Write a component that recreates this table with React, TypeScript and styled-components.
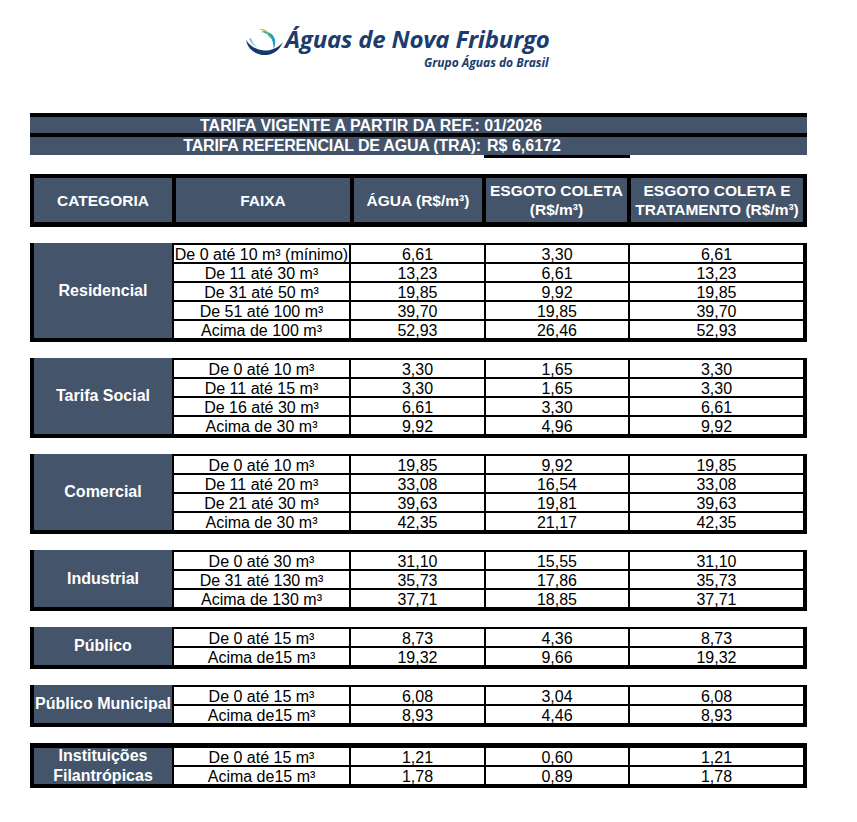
import styled, { createGlobalStyle } from 'styled-components';

type Row = [string, string, string, string];

type Block = {
  name: string;
  rows: Row[];
  fullTop?: boolean;
};

const blocks: Block[] = [
  {
    name: 'Residencial',
    rows: [
      ['De 0 até 10 m³ (mínimo)', '6,61', '3,30', '6,61'],
      ['De 11 até 30 m³', '13,23', '6,61', '13,23'],
      ['De 31 até 50 m³', '19,85', '9,92', '19,85'],
      ['De 51 até 100 m³', '39,70', '19,85', '39,70'],
      ['Acima de 100 m³', '52,93', '26,46', '52,93'],
    ],
  },
  {
    name: 'Tarifa Social',
    rows: [
      ['De 0 até 10 m³', '3,30', '1,65', '3,30'],
      ['De 11 até 15 m³', '3,30', '1,65', '3,30'],
      ['De 16 até 30 m³', '6,61', '3,30', '6,61'],
      ['Acima de 30 m³', '9,92', '4,96', '9,92'],
    ],
  },
  {
    name: 'Comercial',
    rows: [
      ['De 0 até 10 m³', '19,85', '9,92', '19,85'],
      ['De 11 até 20 m³', '33,08', '16,54', '33,08'],
      ['De 21 até 30 m³', '39,63', '19,81', '39,63'],
      ['Acima de 30 m³', '42,35', '21,17', '42,35'],
    ],
  },
  {
    name: 'Industrial',
    rows: [
      ['De 0 até 30 m³', '31,10', '15,55', '31,10'],
      ['De 31 até 130 m³', '35,73', '17,86', '35,73'],
      ['Acima de 130 m³', '37,71', '18,85', '37,71'],
    ],
  },
  {
    name: 'Público',
    rows: [
      ['De 0 até 15 m³', '8,73', '4,36', '8,73'],
      ['Acima de15 m³', '19,32', '9,66', '19,32'],
    ],
  },
  {
    name: 'Público Municipal',
    rows: [
      ['De 0 até 15 m³', '6,08', '3,04', '6,08'],
      ['Acima de15 m³', '8,93', '4,46', '8,93'],
    ],
  },
  {
    name: 'Instituições\nFilantrópicas',
    fullTop: true,
    rows: [
      ['De 0 até 15 m³', '1,21', '0,60', '1,21'],
      ['Acima de15 m³', '1,78', '0,89', '1,78'],
    ],
  },
];

const Logo = () => (
  <LogoWrap>
    <svg width="40" height="30" viewBox="0 0 40 30">
      <path d="M2 13 C4 23 13 29 23 28 C31 27 36 22 39 15 C34 21 27 24 20 23.5 C12 23 6 19 2 13 Z" fill="#16386a" />
      <path d="M5 12 C7 16 10 19 14 20.5 C10 18 8 15 7 11 Z" fill="#6cc5e6" />
      <path d="M17 5 C25 6 30 12 29.5 22 C34 14 30 5 20 4.2 C19 4.2 18 4.5 17 5 Z" fill="#1aa0c9" />
      <path d="M15 2.5 C20 2.8 24 6 25.5 12 C26.5 6 22 2 16.5 2 Z" fill="#86c440" />
    </svg>
    <LogoText>
      <LogoTitle>Águas de Nova Friburgo</LogoTitle>
      <LogoSub>Grupo Águas do Brasil</LogoSub>
    </LogoText>
  </LogoWrap>
);

export default function App() {
  return (
    <>
      <GlobalStyle />
      <Page>
        <Top>
          <Logo />
        </Top>
        <Titles>
          <BarOne>TARIFA VIGENTE A PARTIR DA REF.: 01/2026</BarOne>
          <BarTwo>
            <BarLabel>TARIFA REFERENCIAL DE AGUA (TRA):</BarLabel>
            <BarValue>R$ 6,6172</BarValue>
            <span />
          </BarTwo>
        </Titles>
        <HeadRow>
          <HeadCell>CATEGORIA</HeadCell>
          <HeadCell>FAIXA</HeadCell>
          <HeadCell>ÁGUA (R$/m³)</HeadCell>
          <HeadCell>
            ESGOTO COLETA
            <br />
            (R$/m³)
          </HeadCell>
          <HeadCell>
            ESGOTO COLETA E
            <br />
            TRATAMENTO (R$/m³)
          </HeadCell>
        </HeadRow>
        <Blocks>
          {blocks.map((b) => (
            <BlockGrid key={b.name} $rows={b.rows.length} $fullTop={b.fullTop}>
              <Category $rows={b.rows.length} $fullTop={b.fullTop}>
                {b.name}
              </Category>
              {b.rows.map((r, i) =>
                r.map((v, j) => <DataCell key={`${i}-${j}`}>{v}</DataCell>)
              )}
            </BlockGrid>
          ))}
        </Blocks>
      </Page>
    </>
  );
}

const GlobalStyle = createGlobalStyle`
  html, body {
    margin: 0;
    padding: 0;
    background: #ffffff;
    font-family: "Liberation Sans", Arial, sans-serif;
  }
`;

const slate = '#44546a';

const Page = styled.div`
  width: 777px;
  padding-left: 30px;
  padding-bottom: 30px;
`;

const Top = styled.div`
  height: 113px;
  box-sizing: border-box;
  padding-top: 24px;
  padding-left: 214px;
`;

const LogoWrap = styled.div`
  display: flex;
  align-items: flex-start;
  gap: 1px;
  svg {
    margin-top: 3px;
  }
`;

const LogoText = styled.div`
  display: flex;
  flex-direction: column;
  align-items: flex-end;
  color: #1b3c6c;
  font-family: "Open Sans", "Liberation Sans", sans-serif;
  font-style: italic;
  font-weight: 700;
`;

const LogoTitle = styled.div`
  font-size: 24px;
  line-height: 29px;
  letter-spacing: -0.2px;
`;

const LogoSub = styled.div`
  font-size: 12px;
  line-height: 13px;
  margin-top: 3px;
  margin-right: 1px;
`;

const Titles = styled.div`
  border-top: 4px solid #000;
  color: #fff;
  font-weight: 700;
  font-size: 16px;
`;

const BarOne = styled.div`
  height: 16px;
  line-height: 17px;
  background: ${slate};
  padding-left: 170px;
  border-bottom: 4px solid #000;
`;

const BarTwo = styled.div`
  display: grid;
  grid-template-columns: 454px 146px 1fr;
  height: 18px;
  line-height: 18px;
  background: ${slate};
`;

const BarLabel = styled.div`
  text-align: right;
  padding-right: 3px;
  letter-spacing: -0.2px;
`;

const BarValue = styled.div`
  padding-left: 3px;
  box-shadow: 0 3px 0 #000;
`;

const HeadRow = styled.div`
  margin-top: 19px;
  display: grid;
  grid-template-columns: 138px 174px 128px 141px 172px;
  gap: 4px;
  background: #000;
  border: 4px solid #000;
  border-bottom-width: 5px;
`;

const HeadCell = styled.div`
  height: 44px;
  background: ${slate};
  color: #fff;
  font-weight: 700;
  font-size: 15.5px;
  line-height: 19px;
  display: flex;
  align-items: center;
  justify-content: center;
  text-align: center;
  white-space: nowrap;
`;

const Blocks = styled.div`
  margin-top: 16px;
  display: flex;
  flex-direction: column;
  gap: 16px;
`;

const BlockGrid = styled.div<{ $rows: number; $fullTop?: boolean }>`
  display: grid;
  grid-template-columns: 138px 175px 133px 142px 173px;
  grid-template-rows: repeat(${({ $rows }) => $rows}, 17px);
  gap: 2px;
  padding-top: 2px;
  background: #000;
  border: 4px solid #000;
  border-top: ${({ $fullTop }) => ($fullTop ? '3px' : '0')} solid #000;
`;

const Category = styled.div<{ $rows: number; $fullTop?: boolean }>`
  grid-row: 1 / span ${({ $rows }) => $rows};
  margin-top: ${({ $fullTop }) => ($fullTop ? '0' : '-2px')};
  background: ${slate};
  color: #fff;
  font-weight: 700;
  font-size: 16px;
  line-height: 20px;
  display: flex;
  align-items: center;
  justify-content: center;
  text-align: center;
  white-space: pre-line;
`;

const DataCell = styled.div`
  background: #fff;
  color: #000;
  font-size: 16px;
  line-height: 19px;
  text-align: center;
  white-space: nowrap;
  overflow: hidden;
`;
